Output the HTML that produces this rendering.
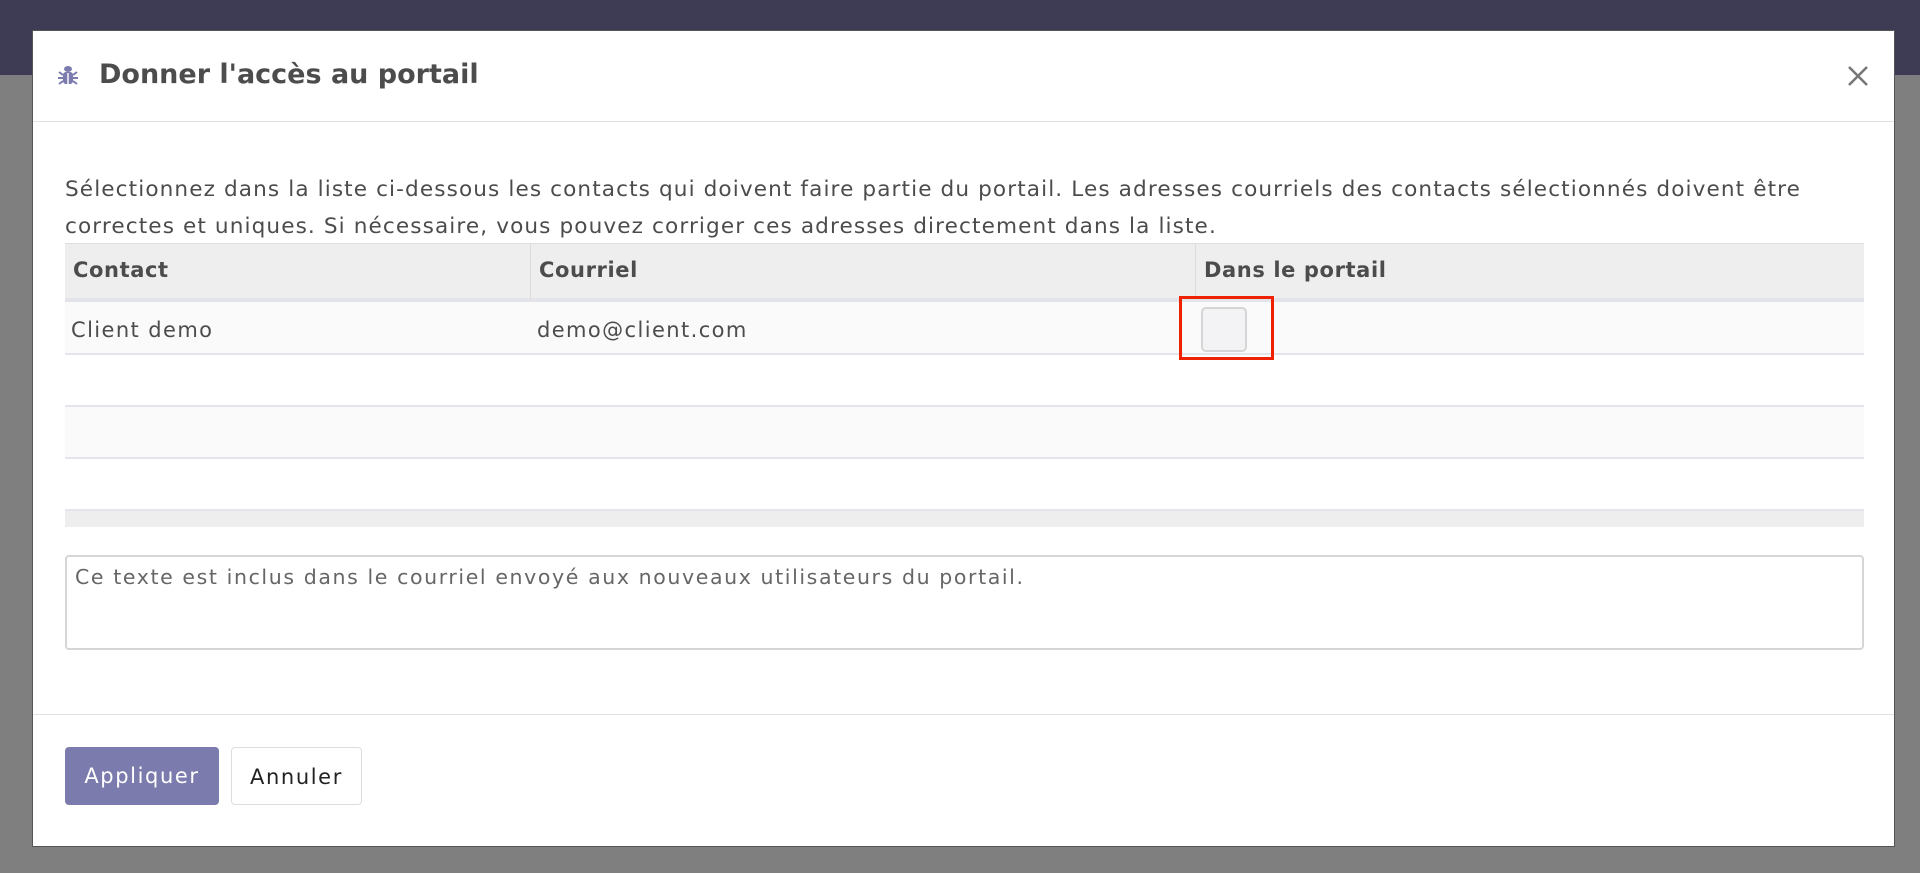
<!DOCTYPE html>
<html><head><meta charset="utf-8"><style>
*{box-sizing:border-box;margin:0;padding:0}
body{width:1920px;height:873px;overflow:hidden;background:#7f7f7f;font-family:"DejaVu Sans","Liberation Sans",sans-serif;color:#4c4c4c;position:relative}
.nav{position:absolute;left:0;top:0;width:1920px;height:75px;background:#3e3c55}
.modal{position:absolute;left:32px;top:30px;width:1863px;height:817px;background:#fff;border:1px solid #555}
.hdr{position:absolute;left:0;top:0;width:100%;height:91px;border-bottom:1px solid #dee2e6}
.title{position:absolute;left:66px;top:28px;font-size:27px;font-weight:bold;color:#4c4c4c}
.p{position:absolute;left:32px;top:140px;width:1760px;font-size:21.6px;letter-spacing:1.1px;line-height:37px;color:#4c4c4c}
.tbl{position:absolute;left:32px;top:212px;width:1799px}
.th{height:59px;background:#eee;border-top:1px solid #ddd;border-bottom:4px solid #e2e4ea;position:relative;font-weight:bold;font-size:21px;letter-spacing:0.6px}
.th span,.tr span{position:absolute;top:14px}
.tr{height:52px;border-bottom:2px solid #e3e5ea;position:relative;font-size:21px;letter-spacing:1.4px}
.div{position:absolute;top:0;width:1px;height:55px;background:#dcdcdc}
.ta{position:absolute;left:32px;top:524px;width:1799px;height:95px;border:2px solid #d6d6d6;border-radius:4px;padding:8px 8px;font-size:20.5px;letter-spacing:1.6px;color:#666}
.ftr{position:absolute;left:0;top:683px;width:100%;border-top:1px solid #dee2e6}
.btn{position:absolute;top:716px;height:58px;border-radius:4px;font-size:21px;letter-spacing:1.6px;line-height:58px;text-align:center}
</style></head><body>
<div class="nav"></div>
<div class="modal">
 <div class="hdr">
  <svg style="position:absolute;left:24px;top:33px" width="22" height="22" viewBox="0 0 22 22" fill="#7c7bad"><ellipse cx="11" cy="5" rx="4" ry="3"/><rect x="6" y="8" width="10" height="12" rx="3"/><path d="M2 8l4 3M20 8l-4 3M1 14h5M21 14h-5M2 20l4-3M20 20l-4-3" stroke="#7c7bad" stroke-width="2"/><rect x="10.3" y="9" width="1.4" height="11" fill="#fff"/></svg>
  <div class="title">Donner l'accès au portail</div>
  <svg style="position:absolute;left:1814px;top:34px" width="22" height="22" viewBox="0 0 22 22"><path d="M2 2L20 20M20 2L2 20" stroke="#777" stroke-width="2.6"/></svg>
 </div>
 <div class="p">Sélectionnez dans la liste ci-dessous les contacts qui doivent faire partie du portail. Les adresses courriels des contacts sélectionnés doivent être<br>correctes et uniques. Si nécessaire, vous pouvez corriger ces adresses directement dans la liste.</div>
 <div class="tbl">
  <div class="th"><span style="left:8px">Contact</span><div class="div" style="left:465px"></div><span style="left:474px">Courriel</span><div class="div" style="left:1130px"></div><span style="left:1139px">Dans le portail</span></div>
  <div class="tr" style="height:53px;background:#fafafa"><span style="left:6px;top:16px">Client demo</span><span style="left:472px;top:16px">demo@client.com</span>
   <div style="position:absolute;left:1136px;top:5px;width:46px;height:45px;border:2px solid #d5d5d5;border-radius:5px;background:#f3f3f5"></div>
   <div style="position:absolute;left:1114px;top:-6px;width:95px;height:64px;border:3px solid #ee2200"></div></div>
  <div class="tr"></div>
  <div class="tr" style="background:#fafafa"></div>
  <div class="tr"></div>
  <div style="height:16px;background:#eee"></div>
 </div>
 <div class="ta">Ce texte est inclus dans le courriel envoyé aux nouveaux utilisateurs du portail.</div>
 <div class="ftr"></div>
 <div class="btn" style="left:32px;width:154px;background:#7c7bad;color:#fff">Appliquer</div>
 <div class="btn" style="left:198px;width:131px;border:1px solid #ddd;color:#222">Annuler</div>
</div>
</body></html>
